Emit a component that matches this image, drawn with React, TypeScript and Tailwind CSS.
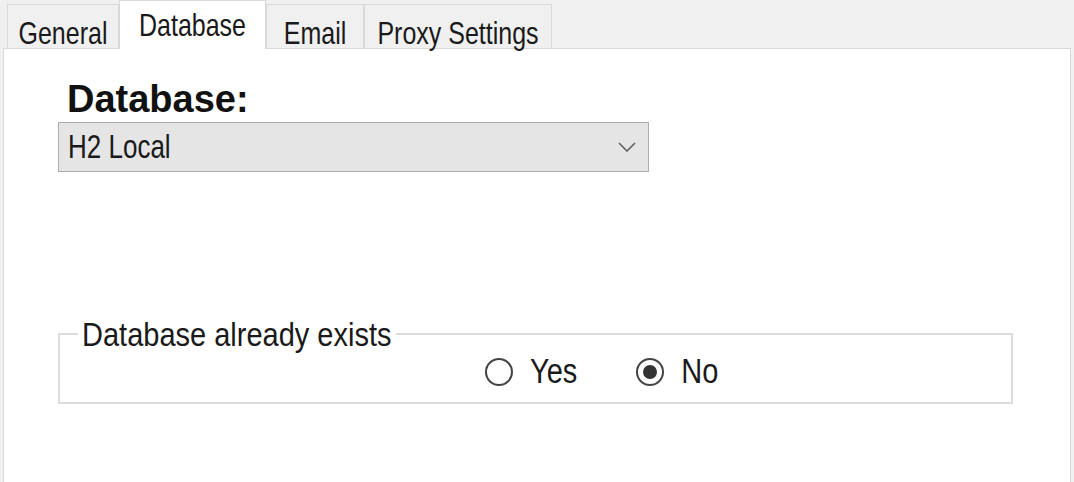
import React from 'react';

const tabs = ['General', 'Database', 'Email', 'Proxy Settings'];

const Tab: React.FC<{ label: string; active: boolean; width: string }> = ({ label, active, width }) => {
  if (active) {
    return (
      <div
        className={`relative z-10 -mb-px flex h-[49px] items-start justify-center border-x border-t border-[#d9d9d9] bg-white pt-[6px] ${width}`}
      >
        <span className="inline-block scale-y-[1.25] text-[25px] text-[#1a1a1a]">{label}</span>
      </div>
    );
  }
  return (
    <div
      className={`flex h-[44px] items-start justify-center border-x border-t border-[#d9d9d9] bg-[#f0f0f0] pt-[10px] ${width}`}
    >
      <span className="inline-block scale-y-[1.25] text-[25px] text-[#1a1a1a]">{label}</span>
    </div>
  );
};

const Radio: React.FC<{ label: string; checked: boolean }> = ({ label, checked }) => (
  <div className="flex items-center gap-[17px]">
    <div className="flex h-[28px] w-[28px] items-center justify-center rounded-full border-[2px] border-[#444]">
      {checked && <div className="h-[14px] w-[14px] rounded-full bg-[#333]" />}
    </div>
    <span className="inline-block scale-y-[1.2] text-[29px] text-[#1a1a1a]">{label}</span>
  </div>
);

export default function App() {
  const widths = ['w-[112px]', 'w-[147px]', 'w-[98px]', 'w-[188px]'];
  return (
    <div className="flex h-[482px] w-[1074px] flex-col overflow-hidden bg-[#f0f0f0] font-['Liberation_Sans',Arial,sans-serif]">
      <div className="flex h-[48px] items-end pl-[7px]">
        {tabs.map((t, i) => (
          <Tab key={t} label={t} active={t === 'Database'} width={widths[i]} />
        ))}
      </div>

      <div className="ml-[3px] mr-[3px] flex-1 border-x border-t border-[#d9d9d9] bg-white pl-[54px] pt-[28px]">
        <div className="ml-[9px] text-[38px] font-bold leading-[44px] text-[#111]">Database:</div>

        <div className="mt-[1px] flex h-[50px] w-[591px] items-center justify-between border border-[#adadad] bg-[#e5e5e5] pl-[9px] pr-[12px]">
          <span className="inline-block scale-y-[1.25] text-[26px] text-[#1a1a1a]">H2 Local</span>
          <svg width="18" height="10" viewBox="0 0 18 10" fill="none">
            <path d="M1 1l8 8 8-8" stroke="#606060" strokeWidth="1.6" />
          </svg>
        </div>

        <div className="relative mt-[161px] h-[71px] w-[955px] border-2 border-[#dcdcdc]">
          <span className="absolute -top-[21px] left-[18px] inline-block scale-y-[1.15] bg-white px-[4px] text-[29px] text-[#1a1a1a]">
            Database already exists
          </span>
          <div className="flex h-full items-center gap-[59px] pl-[425px] pt-[6px]">
            <Radio label="Yes" checked={false} />
            <Radio label="No" checked />
          </div>
        </div>
      </div>
    </div>
  );
}
